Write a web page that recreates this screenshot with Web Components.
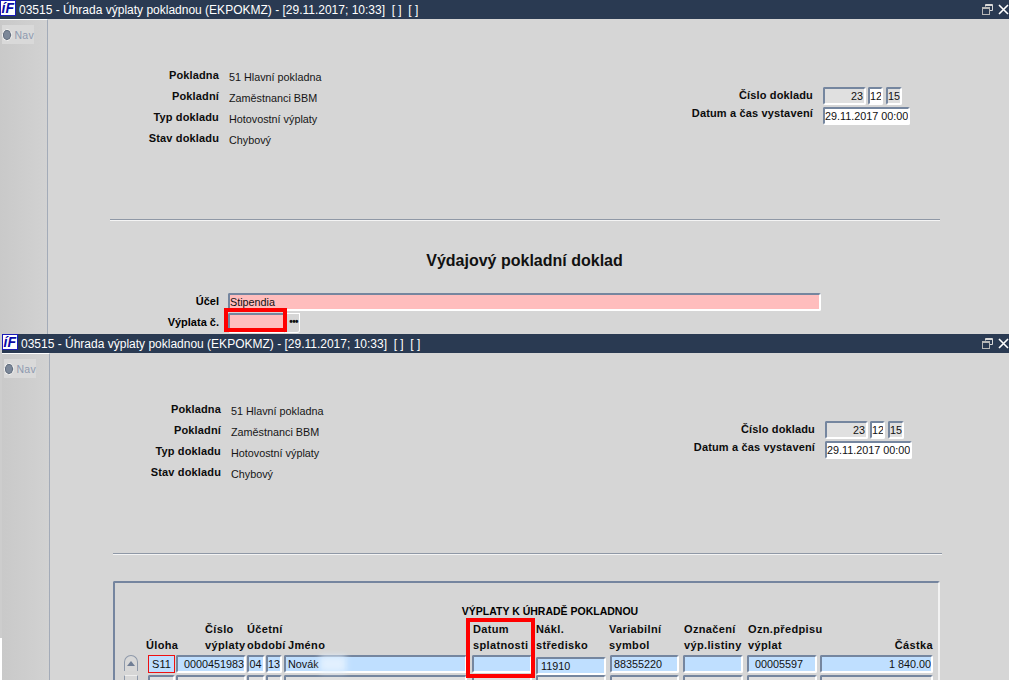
<!DOCTYPE html>
<html lang="cs">
<head>
<meta charset="utf-8">
<title>Úhrada výplaty pokladnou</title>
<style>
  html, body { margin: 0; height: 680px; overflow: hidden; background: #cdcdcd; }
  body { font: 11px "Liberation Sans", Arial, sans-serif; color: #000; position: relative; }
  /* bit of the window behind, sticks out bottom left */
  body::after { content: ""; position: absolute; left: 0; top: 638px; width: 2px; height: 42px; background: #fff; }
  #second { margin-left: 2px; }
</style>
</head>
<body>

<template id="tpl-title">
  <style>
    :host { display: flex; align-items: center; height: 19px; background: #2a3a52; color: #fff; font: 12px "Liberation Sans", Arial, sans-serif; }
    .logo { width: 16px; height: 16px; margin-right: 3px; flex: none; align-self: flex-start; }
    .text { flex: 1; white-space: pre; }
    .btns { display: flex; gap: 5px; align-items: center; flex: none; }
  </style>
  <svg class="logo" viewBox="0 0 16 16">
    <rect x="0" y="0" width="16" height="16" fill="#fff"/>
    <rect x="0.5" y="0.5" width="15" height="15" fill="none" stroke="#1a1ab8"/>
    <text x="1.5" y="13" font-family="Liberation Sans" font-weight="bold" font-style="italic" font-size="14" fill="#0a0aa8">íF</text>
  </svg>
  <span class="text"><slot></slot></span>
  <span class="btns">
    <svg width="11" height="11" viewBox="0 0 11 11">
      <path d="M3.5 2.5V.5h7v6H8" fill="none" stroke="#d8d8d8"/>
      <path d="M3 1.5h7" stroke="#d8d8d8"/>
      <rect x=".5" y="3.5" width="7" height="7" fill="none" stroke="#b8b8b8"/>
      <path d="M0 4h8" stroke="#b8b8b8" stroke-width="2"/>
    </svg>
    <svg width="11" height="11" viewBox="0 0 11 11">
      <path d="M1 1l9 9M10 1l-9 9" stroke="#fff" stroke-width="1.6"/>
    </svg>
  </span>
</template>

<template id="tpl-nav">
  <style>
    :host { display: block; width: 47px; flex: none; background: linear-gradient(90deg, #c9c9c9, #d2d2d2); border-right: 1px solid #a3abb8; padding-top: 5px; border-top: 1px solid #fff; }
    .btn { display: flex; align-items: center; gap: 3px; width: 32px; height: 19px; margin-left: 2px; background: #d9d9d9; color: #8e9ab0; font: 10.5px "Liberation Sans", Arial, sans-serif; letter-spacing: .3px; }
    .dot { width: 8px; height: 8px; margin-left: 1px; border-radius: 50%; background: #7c8899; border: 1px solid #5f6b7c; box-sizing: content-box; outline: 1px dashed #f2f2f2; outline-offset: 0; }
  </style>
  <div class="btn"><span class="dot"></span><span>Nav</span></div>
</template>

<template id="tpl-label-row">
  <style>
    :host { display: contents; }
    .lbl { font-weight: bold; text-align: right; white-space: pre; align-self: center; color: #0c0c0c; letter-spacing: .15px; }
    .val { white-space: pre; align-self: center; color: #151515; font-size: 10.8px; padding-top: 4px; }
  </style>
  <span class="lbl"><slot name="label"></slot></span>
  <span class="val"><slot></slot></span>
</template>

<template id="tpl-field"><style>
    :host { display: block; box-sizing: border-box; height: var(--h, 18px); width: var(--w, auto);
      background: var(--bg, #e0e0e0); color: #111; white-space: pre; overflow: hidden;
      border: 2px solid; border-color: #75869f #ffffff #ffffff #75869f; border-radius: 2px;
      padding: 0 var(--pr, 1px) 0 0; line-height: 14px; font-size: 10.8px; text-align: var(--align, left); }
  </style><slot></slot></template>

<template id="tpl-window">
  <style>
    :host { display: block; overflow: hidden; height: var(--win-h); position: relative; }
    .body { display: flex; height: 100%; }
    .main { flex: 1; min-width: 0; background: #d6d6d6; }
    .head { display: flex; justify-content: space-between; padding: 45px var(--right-pad) 0 0; height: 155px; }
    hr { margin: 0 var(--hr-right) 0 var(--hr-left); border: 0; height: 2px; background: linear-gradient(#8f98a6 50%, #f4f4f4 50%); }
  </style>
  <slot name="title"></slot>
  <div class="body">
    <slot name="nav"></slot>
    <div class="main">
      <div class="head">
        <slot name="left"></slot>
        <slot name="right"></slot>
      </div>
      <hr>
      <slot></slot>
    </div>
  </div>
</template>

<template id="tpl-left">
  <style>
    :host { display: grid; grid-template-columns: 171px 1fr; column-gap: 10px; grid-auto-rows: 21px; align-content: start; }
  </style>
  <slot></slot>
</template>

<template id="tpl-doc">
  <style>
    :host { display: block; position: relative; }
    h2 { margin: 0 8px 0 0; padding: 31px 0 0 0; text-align: center; font: bold 16px/18px "Liberation Sans", Arial, sans-serif; color: #111; height: 41px; }
    .rows { display: grid; grid-template-columns: 171px 593px; column-gap: 9px; row-gap: 2px; }
    .lbl { font-weight: bold; text-align: right; align-self: center; padding-bottom: 2px; }
    .pick { display: flex; }
    .more { width: 15px; height: 20px; box-sizing: border-box; border: 1px solid #fff; border-left: 0; border-bottom-right-radius: 3px; font: bold 10px/15px "Liberation Sans", Arial, sans-serif; text-align: right; color: #111; padding-right: 1px; letter-spacing: -.6px; overflow: hidden; }
    .mark { position: absolute; left: 176px; top: 87px; width: 63px; height: 24px; box-sizing: border-box; border: 4px solid #f00; }
    x-field.wide { --bg: #ffbdbd; --h: 18px; }
    x-field.num { --bg: #ffbdbd; --w: 57px; --h: 20px; }
  </style>
  <h2>Výdajový pokladní doklad</h2>
  <div class="rows">
    <span class="lbl">Účel</span>
    <x-field class="wide">Stipendia</x-field>
    <span class="lbl">Výplata č.</span>
    <div class="pick"><x-field class="num"></x-field><span class="more">•••</span></div>
  </div>
  <span class="mark"></span>
</template>

<template id="tpl-table">
  <style>
    :host { display: block; position: relative; margin: 26px 0 0 63px; width: 827px; height: 120px; box-sizing: border-box;
      border: 2px solid; border-color: #75859f #f2f2f2 #f2f2f2 #75859f; border-radius: 2px; }
    .cap { text-align: center; font-weight: bold; font-size: 10.5px; height: 14px; line-height: 12px; padding: 22px 0 0 47px; }
    .grid { display: grid; margin-left: 9px;
      grid-template-columns: 24px 28px 71px 19px 18px 188px 64px 74px 73px 64px 73px 116px;
      grid-template-rows: 36px 20px 20px; }
    .h { align-self: end; font-weight: bold; line-height: 16px; padding-bottom: 2px; white-space: pre; letter-spacing: .35px; color: #0c0c0c; }
    .r { text-align: right; padding-right: 3px; }
    .m1 { margin-right: 1px; } .m2 { margin-right: 2px; } .m3 { margin-right: 3px; } .m4 { margin-right: 4px; } .m5 { margin-right: 5px; }
    .blue { --bg: #bfdfff; }
    .up { width: 14px; height: 16px; border: 1px solid #8e99aa; border-bottom: 0; border-radius: 7px 7px 0 0; background: #d8d8d8; box-sizing: border-box; display: flex; align-items: center; justify-content: center; }
    .up i { width: 0; height: 0; border: 4px solid transparent; border-top: 0; border-bottom: 5px solid #6f7d94; }
    .track { border-radius: 0; height: 20px; border-top: 1px solid #eee; }
    .red { border: 1px solid #e11; height: 18px; width: 27px; box-sizing: border-box; background: #bfdfff; color: #111; text-align: center; line-height: 16px; font-size: 11px; }
    .mark { position: absolute; left: 351px; top: 35px; width: 69px; height: 60px; box-sizing: border-box; border: 4px solid #f00; }
    .smudge { position: absolute; left: 205px; top: 73px; width: 26px; height: 16px; background: #e2f0ff; filter: blur(3px); }
    .low { margin-top: 2px; }
    .pad { padding-left: 2px; }
  </style>
  <div class="cap">VÝPLATY K ÚHRADĚ POKLADNOU</div>
  <div class="grid">
    <span></span>
    <span class="h" style="margin-left:-2px">Úloha</span>
    <span class="h" style="padding-left:29px">Číslo
výplaty</span>
    <span class="h" style="grid-column: span 2">Účetní
období</span>
    <span class="h" style="padding-left:4px">Jméno</span>
    <span class="h" style="padding-left:1px">Datum
splatnosti</span>
    <span class="h">Nákl.
středisko</span>
    <span class="h" style="margin-left:-1px">Variabilní
symbol</span>
    <span class="h" style="padding-left:1px">Označení
výp.listiny</span>
    <span class="h" style="padding-left:1px">Ozn.předpisu
výplat</span>
    <span class="h r">Částka</span>

    <span class="up"><i></i></span>
    <span class="red">S11</span>
    <x-field class="m1 blue" style="--align:right; --pr:0">0000451983</x-field>
    <x-field class="m1 blue" style="--align:center">04</x-field>
    <x-field class="m2 blue" style="--align:center">13</x-field>
    <x-field class="m5 blue pad">Novák</x-field>
    <x-field class="m4 blue"></x-field>
    <x-field class="m4 blue low"> 11910</x-field>
    <x-field class="m4 blue pad">88355220</x-field>
    <x-field class="m4 blue"></x-field>
    <x-field class="m3 blue">  00005597</x-field>
    <x-field class="m3 blue" style="--align:right; --pr:0">1 840.00</x-field>

    <span class="up track"></span>
    <x-field class="m1"></x-field>
    <x-field class="m1"></x-field>
    <x-field class="m1"></x-field>
    <x-field class="m2"></x-field>
    <x-field class="m5"></x-field>
    <x-field class="m4"></x-field>
    <x-field class="m4"></x-field>
    <x-field class="m4"></x-field>
    <x-field class="m4"></x-field>
    <x-field class="m3"></x-field>
    <x-field class="m3"></x-field>
  </div>
  <span class="smudge"></span>
  <span class="mark"></span>
</template>

<x-window style="--win-h:334px; --right-pad:99px; --hr-left:62px; --hr-right:69px">
  <x-title slot="title">03515 - Úhrada výplaty pokladnou (EKPOKMZ) - [29.11.2017; 10:33]  [ ]  [ ]</x-title>
  <x-nav slot="nav"></x-nav>
  <x-left slot="left">
    <x-row><span slot="label">Pokladna</span>51 Hlavní pokladna</x-row>
    <x-row><span slot="label">Pokladní</span>Zaměstnanci BBM</x-row>
    <x-row><span slot="label">Typ dokladu</span>Hotovostní výplaty</x-row>
    <x-row><span slot="label">Stav dokladu</span>Chybový</x-row>
  </x-left>
  <x-right slot="right"></x-right>
  <x-doc></x-doc>
</x-window>

<x-window id="second" style="--win-h:346px; --right-pad:97px; --hr-left:63px; --hr-right:67px">
  <x-title slot="title">03515 - Úhrada výplaty pokladnou (EKPOKMZ) - [29.11.2017; 10:33]  [ ]  [ ]</x-title>
  <x-nav slot="nav"></x-nav>
  <x-left slot="left">
    <x-row><span slot="label">Pokladna</span>51 Hlavní pokladna</x-row>
    <x-row><span slot="label">Pokladní</span>Zaměstnanci BBM</x-row>
    <x-row><span slot="label">Typ dokladu</span>Hotovostní výplaty</x-row>
    <x-row><span slot="label">Stav dokladu</span>Chybový</x-row>
  </x-left>
  <x-right slot="right"></x-right>
  <x-table></x-table>
</x-window>

<script>
  function simple(name, tplId) {
    customElements.define(name, class extends HTMLElement {
      constructor() {
        super();
        this.attachShadow({ mode: "open" }).append(document.getElementById(tplId).content.cloneNode(true));
      }
    });
  }
  simple("x-title", "tpl-title");
  simple("x-nav", "tpl-nav");
  simple("x-row", "tpl-label-row");
  simple("x-field", "tpl-field");
  simple("x-window", "tpl-window");
  simple("x-left", "tpl-left");
  simple("x-doc", "tpl-doc");
  simple("x-table", "tpl-table");

  // right hand block, same in both windows
  class RightBlock extends HTMLElement {
    constructor() {
      super();
      this.attachShadow({ mode: "open" }).innerHTML = `<style>
        :host { display: grid; grid-template-columns: auto 87px; column-gap: 10px; grid-auto-rows: 20px; align-content: start; padding-top: 23px; }
        .lbl { font-weight: bold; text-align: right; white-space: pre; align-self: start; letter-spacing: .15px; color: #0c0c0c; }
        .num { display: flex; }
        x-field { --h: 18px; }
        .a { --w: 43px; --align: right; margin-right: 2px; }
        .b { --w: 15px; --bg: #fff; --align: center; margin-right: 3px; }
        .c { --w: 16px; --align: center; }
        .d { --w: 87px; --bg: #fff; }
      </style>
      <span class="lbl" style="padding-top:2px">Číslo dokladu</span>
      <div class="num"><x-field class="a">23</x-field><x-field class="b">12</x-field><x-field class="c">15</x-field></div>
      <span class="lbl">Datum a čas vystavení</span>
      <x-field class="d">29.11.2017 00:00</x-field>`;
    }
  }
  customElements.define("x-right", RightBlock);
</script>
</body>
</html>
